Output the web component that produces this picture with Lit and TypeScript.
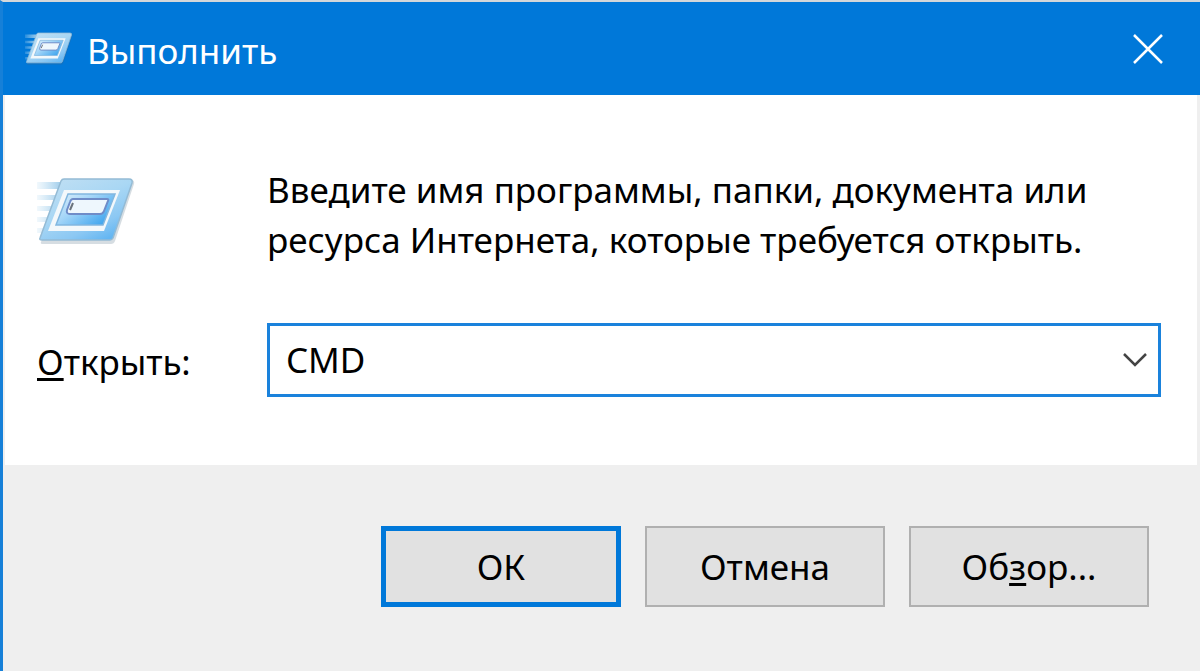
import { LitElement, html, css, svg } from "lit";
import { customElement, state } from "lit/decorators.js";

@customElement("run-icon")
export class RunIcon extends LitElement {
  static styles = css`
    :host {
      display: block;
      flex: none;
    }
    svg {
      display: block;
      width: 100%;
      height: auto;
    }
  `;

  render() {
    return html`<svg viewBox="0 0 98 68" aria-hidden="true">
      ${svg`
      <defs>
        <linearGradient id="frame" x1="0" y1="0" x2="0.7" y2="1">
          <stop offset="0" stop-color="#c3e0f3" />
          <stop offset="0.5" stop-color="#a9d7f4" />
          <stop offset="0.8" stop-color="#8cc8f3" />
          <stop offset="1" stop-color="#64b6f2" />
        </linearGradient>
        <linearGradient id="panel" x1="0" y1="0" x2="1" y2="0.7">
          <stop offset="0" stop-color="#e0f1fb" />
          <stop offset="0.45" stop-color="#a3d5f8" />
          <stop offset="1" stop-color="#3fa5ee" />
        </linearGradient>
        <linearGradient id="trail" x1="0" y1="0" x2="1" y2="0">
          <stop offset="0" stop-color="#b9dcf2" stop-opacity="0.2" />
          <stop offset="1" stop-color="#9ccbea" />
        </linearGradient>
      </defs>
      <path d="M0 5h25l-3 7H0zM0 18h20l-2 5H0zM0 29h16l-2 5H0zM0 40h12l-2 5H0zM0 51h8l-2 5H0z" fill="url(#trail)" />
      <path d="M4 65 26 5q1-2 4-2h64q4 0 3 4L78 64q-1 3-4 3H6q-3 0-2-2z" fill="#45667d" opacity=".22" />
      <path d="M3 61 24 4q1-2 3-2h65q4 0 3 4L76 61q-1 2-3 2H5q-3 0-2-2z" fill="url(#frame)" stroke="#94bbd5" stroke-width="1.5" />
      <path d="M27 13h56L67 54H11z" fill="#f3f8fb" />
      <path d="M31 17h47L66 48H19z" fill="url(#panel)" stroke="#82b7df" stroke-width="1.5" />
      <path d="M36 22h34q2 0 1 2l-4 10q-1 3-4 3H33q-4 0-3-4l3-8q1-3 3-3z" fill="#eef7fd" stroke="#6f8cc8" stroke-width="2" />
      <path d="m36 26-3 7" stroke="#6a737c" stroke-width="2" />
      `}
    </svg>`;
  }
}

@customElement("app-root")
export class AppRoot extends LitElement {
  @state() private command = "CMD";

  static styles = css`
    :host {
      display: block;
      font-family: "Noto Sans", "Open Sans", sans-serif;
      font-size: 35px;
      line-height: 50px;
      color: #000;
    }
    * {
      box-sizing: border-box;
    }
    .window {
      display: flex;
      flex-direction: column;
      min-height: 100vh;
      border-top: 2px solid #d3d7da;
      border-left: 3px solid #1680d8;
      background: #efefef;
    }
    .titlebar {
      display: flex;
      align-items: center;
      gap: 14px;
      padding: 20px 36px 19px 22px;
      background: #0078d9;
      color: #fff;
    }
    .title {
      flex: 1;
      margin: 0;
      padding-top: 4px;
      font-size: inherit;
      font-weight: 400;
    }
    .small {
      width: 48px;
    }
    .large {
      width: 98px;
      margin-top: 12px;
    }
    button,
    input {
      font: inherit;
      color: inherit;
      border-radius: 0;
    }
    .close {
      display: flex;
      padding: 0;
      border: 0;
      background: none;
    }
    .body {
      display: grid;
      grid-template-columns: 230px 1fr;
      row-gap: 58px;
      margin: 0 3px 0 2px;
      padding: 70px 36px 68px 32px;
      background: #fff;
    }
    .text {
      max-width: 840px;
      margin: 0;
    }
    .label {
      align-self: center;
      padding-top: 4px;
    }
    .combo {
      display: flex;
      align-items: center;
      height: 74px;
      border: 3px solid #1a82dc;
      background: #fff;
    }
    .field {
      flex: 1;
      min-width: 0;
      padding: 0 16px;
      border: 0;
      outline: 0;
      background: none;
    }
    .arrow {
      display: flex;
      padding: 0 10px;
      border: 0;
      background: none;
    }
    .footer {
      display: flex;
      justify-content: flex-end;
      gap: 24px;
      padding: 61px 51px;
    }
    .button {
      width: 240px;
      height: 81px;
      padding: 0;
      border: 2px solid #b0b0b0;
      background: #e1e1e1;
    }
    .default {
      border: 5px solid #0078d9;
    }
    .key {
      text-decoration: underline;
      text-decoration-thickness: 3px;
      text-underline-offset: 3px;
      text-decoration-skip-ink: none;
    }
  `;

  private onInput(event: Event) {
    this.command = (event.target as HTMLInputElement).value;
  }

  render() {
    return html`
      <main class="window">
        <header class="titlebar">
          <run-icon class="small"></run-icon>
          <h1 class="title">Выполнить</h1>
          <button class="close" type="button" aria-label="Закрыть">
            <svg width="32" height="32" viewBox="0 0 32 32" fill="none" stroke="#fff" stroke-width="2.5">
              <path d="M2 2 30 30M30 2 2 30" />
            </svg>
          </button>
        </header>
        <section class="body">
          <run-icon class="large"></run-icon>
          <p class="text">Введите имя программы, папки, документа или ресурса Интернета, которые требуется открыть.</p>
          <label class="label" for="command"><span class="key">О</span>ткрыть:</label>
          <div class="combo">
            <input class="field" id="command" type="text" .value=${this.command} @input=${this.onInput} />
            <button class="arrow" type="button" aria-label="Показать список">
              <svg width="26" height="16" viewBox="0 0 26 16" fill="none" stroke="#444" stroke-width="2.5">
                <path d="M2 2 13 13 24 2" />
              </svg>
            </button>
          </div>
        </section>
        <footer class="footer">
          <button class="button default" type="button">ОК</button>
          <button class="button" type="button">Отмена</button>
          <button class="button" type="button">Об<span class="key">з</span>ор...</button>
        </footer>
      </main>
    `;
  }
}
